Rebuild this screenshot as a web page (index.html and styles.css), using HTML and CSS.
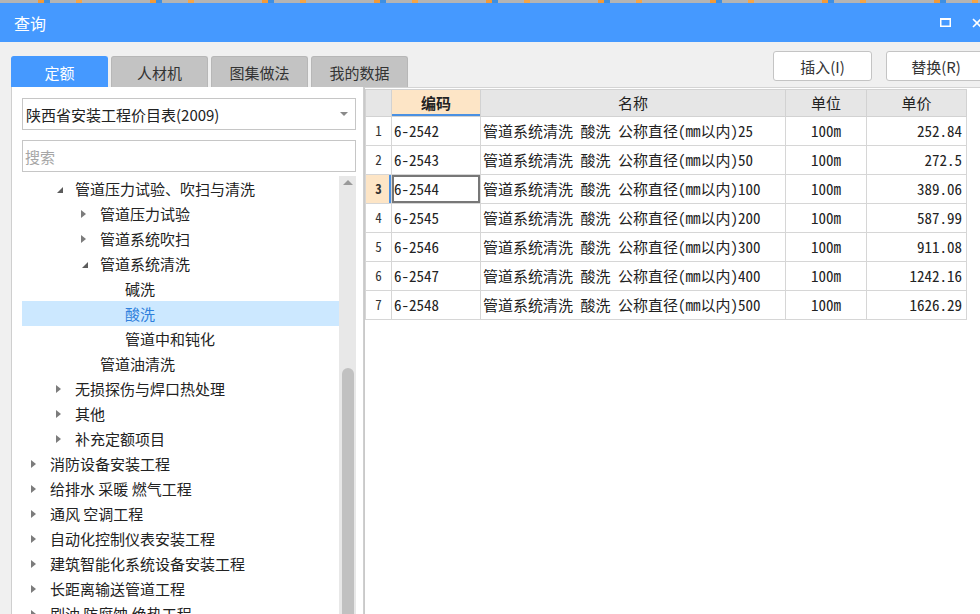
FILE: index.html
```html
<!DOCTYPE html>
<html lang="zh-CN">
<head>
<meta charset="utf-8">
<title>查询</title>
<link rel="stylesheet" href="styles.css">
</head>
<body>
<div class="strip"></div>
<div class="titlebar">
  <span class="title">查询</span>
  <div class="winctl">
    <svg class="ic-max" width="11" height="9" viewBox="0 0 11 9"><rect x="0.75" y="1" width="9.5" height="7.25" fill="none" stroke="#fff" stroke-width="1.5"/><rect x="0" y="0" width="11" height="2" fill="#fff"/></svg>
    <svg class="ic-close" width="10" height="10" viewBox="0 0 10 10"><path d="M1 1L9 9M9 1L1 9" stroke="#fff" stroke-width="1.6" fill="none"/></svg>
  </div>
</div>
<div class="toolbar">
  <div class="tabs">
    <div class="tab active">定额</div>
    <div class="tab">人材机</div>
    <div class="tab">图集做法</div>
    <div class="tab">我的数据</div>
  </div>
  <div class="buttons">
    <button class="btn">插入(I)</button>
    <button class="btn">替换(R)</button>
  </div>
</div>
<div class="main">
  <div class="left">
    <div class="select"><span>陕西省安装工程价目表(2009)</span><span class="caret"></span></div>
    <div class="search">搜索</div>
    <div class="treewrap">
      <div class="tree">
        <div class="row l1"><span class="tg e"></span>管道压力试验、吹扫与清洗</div>
        <div class="row l2"><span class="tg c"></span>管道压力试验</div>
        <div class="row l2"><span class="tg c"></span>管道系统吹扫</div>
        <div class="row l2"><span class="tg e"></span>管道系统清洗</div>
        <div class="row l3"><span class="tg"></span>碱洗</div>
        <div class="row l3 sel"><span class="tg"></span>酸洗</div>
        <div class="row l3"><span class="tg"></span>管道中和钝化</div>
        <div class="row l2"><span class="tg"></span>管道油清洗</div>
        <div class="row l1"><span class="tg c"></span>无损探伤与焊口热处理</div>
        <div class="row l1"><span class="tg c"></span>其他</div>
        <div class="row l1"><span class="tg c"></span>补充定额项目</div>
        <div class="row l0"><span class="tg c"></span>消防设备安装工程</div>
        <div class="row l0"><span class="tg c"></span>给排水 采暖 燃气工程</div>
        <div class="row l0"><span class="tg c"></span>通风 空调工程</div>
        <div class="row l0"><span class="tg c"></span>自动化控制仪表安装工程</div>
        <div class="row l0"><span class="tg c"></span>建筑智能化系统设备安装工程</div>
        <div class="row l0"><span class="tg c"></span>长距离输送管道工程</div>
        <div class="row l0"><span class="tg c"></span>刷油 防腐蚀 绝热工程</div>
      </div>
      <div class="vscroll"><div class="up"></div><div class="thumb"></div></div>
    </div>
  </div>
  <div class="right">
    <table class="grid">
      <colgroup><col class="c-num"><col class="c-code"><col class="c-name"><col class="c-unit"><col class="c-price"></colgroup>
      <thead>
        <tr><th></th><th class="h-code">编码</th><th>名称</th><th>单位</th><th>单价</th></tr>
      </thead>
      <tbody>
        <tr><td class="num">1</td><td>6-2542</td><td>管道系统清洗 酸洗 公称直径(mm以内)25</td><td class="unit">100m</td><td class="price">252.84</td></tr>
        <tr><td class="num">2</td><td>6-2543</td><td>管道系统清洗 酸洗 公称直径(mm以内)50</td><td class="unit">100m</td><td class="price">272.5</td></tr>
        <tr class="currow"><td class="num">3</td><td class="cur">6-2544</td><td>管道系统清洗 酸洗 公称直径(mm以内)100</td><td class="unit">100m</td><td class="price">389.06</td></tr>
        <tr><td class="num">4</td><td>6-2545</td><td>管道系统清洗 酸洗 公称直径(mm以内)200</td><td class="unit">100m</td><td class="price">587.99</td></tr>
        <tr><td class="num">5</td><td>6-2546</td><td>管道系统清洗 酸洗 公称直径(mm以内)300</td><td class="unit">100m</td><td class="price">911.08</td></tr>
        <tr><td class="num">6</td><td>6-2547</td><td>管道系统清洗 酸洗 公称直径(mm以内)400</td><td class="unit">100m</td><td class="price">1242.16</td></tr>
        <tr><td class="num">7</td><td>6-2548</td><td>管道系统清洗 酸洗 公称直径(mm以内)500</td><td class="unit">100m</td><td class="price">1626.29</td></tr>
      </tbody>
    </table>
  </div>
</div>
</body>
</html>
```
FILE: styles.css
```css
html, body {
  margin: 0;
  padding: 0;
}
body {
  width: 980px;
  height: 614px;
  overflow: hidden;
  background: #f0f0f0;
  font-family: "Noto Sans CJK SC", "Noto Sans", sans-serif;
  color: #222;
}

.strip {
  height: 3px;
  background: repeating-linear-gradient(90deg,
    #b4b4b4 0 38px, #f29a38 38px 44px, #3f8fe0 44px 50px,
    #b4b4b4 50px 76px, #f6a545 76px 82px, #b4b4b4 82px 112px);
}

.titlebar {
  height: 39px;
  background: #4599ff;
  display: flex;
  align-items: center;
  padding-left: 14px;
  color: #fff;
}
.title {
  font-size: 16px;
  line-height: 1;
}
.winctl {
  margin-left: auto;
  margin-right: -2px;
  display: flex;
  align-items: center;
  gap: 21px;
}
.winctl svg {
  display: block;
}

.toolbar {
  height: 45px;
  display: flex;
}
.tabs {
  display: flex;
  gap: 3px;
  align-self: flex-end;
  padding-left: 11px;
}
.tab {
  width: 97px;
  height: 31px;
  box-sizing: border-box;
  background: #c3c3c3;
  border: 1px solid #b7b7b7;
  border-bottom: none;
  border-radius: 3px 3px 0 0;
  font-size: 15px;
  color: #333;
  display: flex;
  align-items: center;
  justify-content: center;
}
.tab.active {
  background: #4599ff;
  border-color: #4599ff;
  color: #fff;
}
.buttons {
  margin-left: auto;
  margin-right: -6px;
  margin-top: 9px;
  display: flex;
  gap: 14px;
  align-items: flex-start;
}
.btn {
  width: 99px;
  height: 30px;
  box-sizing: border-box;
  border: 1px solid #c4c4c4;
  border-radius: 3px;
  background: #fff;
  font-family: "Noto Sans CJK SC", "Noto Sans", sans-serif;
  font-size: 15px;
  color: #333;
  padding: 0;
}
.btn + .btn {
  width: 100px;
}

.main {
  display: flex;
  height: 527px;
}
.left {
  margin-left: 11px;
  width: 353px;
  flex: none;
  box-sizing: border-box;
  background: #fff;
  border-left: 1px solid #cfcfcf;
  border-right: 1px solid #cfcfcf;
  padding: 11px 7px 0 10px;
  display: flex;
  flex-direction: column;
}
.select {
  height: 32px;
  box-sizing: border-box;
  border: 1px solid #c6c6c6;
  display: flex;
  align-items: center;
  padding: 0 7px 0 3px;
  font-size: 15px;
  color: #222;
}
.caret {
  margin-left: auto;
  width: 0;
  height: 0;
  border-top: 4px solid #8a8a8a;
  border-left: 4px solid transparent;
  border-right: 4px solid transparent;
}
.search {
  margin-top: 10px;
  height: 32px;
  box-sizing: border-box;
  border: 1px solid #c6c6c6;
  display: flex;
  align-items: center;
  padding-left: 2px;
  font-size: 15px;
  color: #a6a6a6;
}
.treewrap {
  margin-top: 4px;
  flex: 1;
  min-height: 0;
  display: flex;
  overflow: hidden;
}
.tree {
  flex: 1;
  overflow: hidden;
}
.row {
  height: 25px;
  display: flex;
  align-items: center;
  font-size: 15px;
  color: #222;
  white-space: nowrap;
}
.row.l1 { padding-left: 25px; }
.row.l2 { padding-left: 50px; }
.row.l3 { padding-left: 75px; }
.row.sel {
  background: #cce8ff;
  color: #2f7fdc;
}
.tg {
  width: 28px;
  flex: none;
  display: flex;
  align-items: center;
  height: 25px;
}
.tg.c::before {
  content: "";
  margin-left: 9px;
  width: 0;
  height: 0;
  border-left: 5px solid #7c7c7c;
  border-top: 4px solid transparent;
  border-bottom: 4px solid transparent;
}
.tg.e::before {
  content: "";
  margin-left: 10px;
  margin-top: 3px;
  width: 0;
  height: 0;
  border-bottom: 6px solid #5c5c5c;
  border-left: 6px solid transparent;
}
.vscroll {
  width: 17px;
  flex: none;
  background: #e8e8e8;
  display: flex;
  flex-direction: column;
  align-items: center;
}
.up {
  margin-top: 4px;
  width: 0;
  height: 0;
  border-bottom: 5px solid #9a9a9a;
  border-left: 5px solid transparent;
  border-right: 5px solid transparent;
}
.thumb {
  margin-top: auto;
  width: 12px;
  height: 246px;
  background: #c1c1c1;
  border-radius: 6px 6px 0 0;
}

.right {
  flex: 1;
  background: #fff;
  border-left: 1px solid #c9c9c9;
  border-top: 1px solid #d4d4d4;
  padding-top: 1px;
}
.grid {
  border-collapse: collapse;
  table-layout: fixed;
  width: 602px;
}
.c-num { width: 26px; }
.c-code { width: 89px; }
.c-name { width: 305px; }
.c-unit { width: 81px; }
.c-price { width: 100px; }
.grid th {
  height: 26px;
  padding: 0;
  line-height: 20px;
  background: #e6e6e6;
  border: 1px solid #d2d2d2;
  font-weight: normal;
  font-size: 15px;
  color: #222;
  text-align: center;
}
.grid th.h-code {
  background: #fde5c6;
  font-weight: bold;
  box-shadow: inset 0 -2px 0 #4a90e2;
}
.grid td {
  height: 28px;
  padding: 0 2px;
  line-height: 20px;
  border: 1px solid #d6d6d6;
  font-family: "Noto Sans Mono CJK SC", "Noto Sans CJK SC", monospace;
  font-size: 15px;
  color: #222;
  white-space: nowrap;
  overflow: hidden;
}
.grid td.num {
  padding: 0;
  text-align: center;
  font-size: 13px;
  color: #333;
}
.grid tr.currow td.num {
  background: #fde5c6;
  font-weight: bold;
  box-shadow: inset -2px 0 0 #4a90e2;
}
.grid td.cur {
  box-shadow: inset 0 0 0 2px #777;
}
.grid td.unit {
  text-align: center;
}
.grid td.price {
  text-align: right;
  padding-right: 4px;
}
```
